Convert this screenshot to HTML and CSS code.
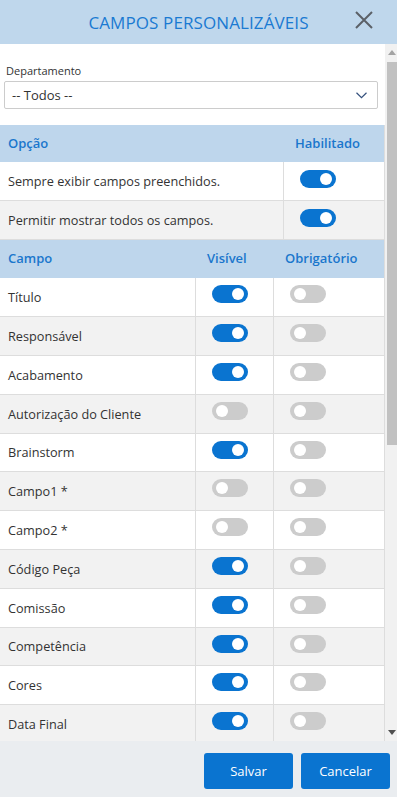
FILE: index.html
```html
<!DOCTYPE html>
<html lang="pt-BR">
<head>
<meta charset="UTF-8">
<meta name="viewport" content="width=device-width, initial-scale=1.0">
<title>Campos Personalizáveis</title>
<link rel="stylesheet" href="styles.css">
</head>
<body>

<div class="dialog">
    <div class="dialog-header">
        <h1>CAMPOS PERSONALIZÁVEIS</h1>
        <button class="close" aria-label="Fechar">
            <svg width="18" height="18" viewBox="0 0 18 18"><path d="M1 1 L17 17 M17 1 L1 17" stroke="#5b6067" stroke-width="2" fill="none"/></svg>
        </button>
    </div>

    <div class="dialog-body">
        <div class="content">
            <div class="filter">
                <label>Departamento</label>
                <div class="select">
                    <span>-- Todos --</span>
                    <svg width="11" height="7" viewBox="0 0 11 7"><path d="M0.5 0.8 L5.5 5.6 L10.5 0.8" stroke="#34507c" stroke-width="1.2" fill="none"/></svg>
                </div>
            </div>

            <div class="grid options">
                <div class="row head">
                    <div class="cell">Opção</div>
                    <div class="cell">Habilitado</div>
                </div>
                <div class="row">
                    <div class="cell">Sempre exibir campos preenchidos.</div>
                    <div class="cell sw"><span class="toggle on"></span></div>
                </div>
                <div class="row">
                    <div class="cell">Permitir mostrar todos os campos.</div>
                    <div class="cell sw"><span class="toggle on"></span></div>
                </div>
            </div>

            <div class="grid fields" id="fields">
                <div class="row head">
                    <div class="cell">Campo</div>
                    <div class="cell">Visível</div>
                    <div class="cell">Obrigatório</div>
                </div>
            </div>
        </div>

        <div class="scrollbar">
            <div class="arrow">
                <svg width="8" height="5" viewBox="0 0 8 5"><path d="M0 5 L4 0 L8 5 Z" fill="#a3a3a3"/></svg>
            </div>
            <div class="track">
                <div class="thumb"></div>
            </div>
            <div class="arrow">
                <svg width="8" height="5" viewBox="0 0 8 5"><path d="M0 0 L8 0 L4 5 Z" fill="#505050"/></svg>
            </div>
        </div>
    </div>

    <div class="dialog-footer">
        <button class="btn">Salvar</button>
        <button class="btn">Cancelar</button>
    </div>
</div>

<script>
    // lista de campos: [nome, visivel, obrigatorio]
    var campos = [
        ['Título', 1, 0],
        ['Responsável', 1, 0],
        ['Acabamento', 1, 0],
        ['Autorização do Cliente', 0, 0],
        ['Brainstorm', 1, 0],
        ['Campo1 *', 0, 0],
        ['Campo2 *', 0, 0],
        ['Código Peça', 1, 0],
        ['Comissão', 1, 0],
        ['Competência', 1, 0],
        ['Cores', 1, 0],
        ['Data Final', 1, 0]
    ];

    var box = document.getElementById('fields');
    campos.forEach(function (c) {
        var row = document.createElement('div');
        row.className = 'row';
        row.innerHTML =
            '<div class="cell">' + c[0] + '</div>' +
            '<div class="cell sw"><span class="toggle' + (c[1] ? ' on' : '') + '"></span></div>' +
            '<div class="cell sw"><span class="toggle' + (c[2] ? ' on' : '') + '"></span></div>';
        box.appendChild(row);
    });
</script>

</body>
</html>
```

FILE: styles.css
```css
/* Campos personalizáveis */
body {
    margin: 0;
    padding: 0;
    font-family: "Open Sans", Arial, sans-serif;
    color: #333;
    background-color: #fff;
}

.dialog {
    display: flex;
    flex-direction: column;
    height: 797px;
    width: 397px;
}

.dialog-header {
    position: relative;
    height: 44px;
    flex-shrink: 0;
    background-color: #bfd7ec;
    display: flex;
    align-items: center;
    justify-content: center;
}

.dialog-header h1 {
    margin: 0;
    font-size: 17px;
    font-weight: normal;
    color: #1a7ad2;
    letter-spacing: 0.1px;
}

.close {
    position: absolute;
    top: 11px;
    right: 24px;
    width: 18px;
    height: 18px;
    padding: 0;
    border: none;
    background: none;
    cursor: pointer;
}

.close svg {
    display: block;
}

.dialog-body {
    flex: 1;
    display: flex;
    overflow: hidden;
    background-color: #fff;
}

.content {
    width: 385px;
    flex-shrink: 0;
    overflow: hidden;
}

/* barra de rolagem desenhada */
.scrollbar {
    width: 12px;
    display: flex;
    flex-direction: column;
    background-color: #f1f1f1;
}

.arrow {
    height: 17px;
    display: flex;
    align-items: center;
    justify-content: center;
    padding-left: 1px;
}

.track {
    flex: 1;
    padding-top: 1px;
}

.thumb {
    height: 383px;
    margin-left: 2px;
    background-color: #c1c1c1;
}

.filter {
    padding: 20px 7px 16px 4px;
}

.filter label {
    display: block;
    font-size: 11px;
    line-height: 14px;
    margin-left: 2px;
    margin-bottom: 3px;
}

.select {
    height: 28px;
    box-sizing: border-box;
    border: 1px solid #ccc;
    border-radius: 2px;
    display: flex;
    align-items: center;
    justify-content: space-between;
    padding: 0 10px 0 7px;
    font-size: 13px;
}

.grid {
    border-right: 1px solid #ddd;
}

.row {
    display: grid;
    height: 38.8px;
    box-sizing: border-box;
    border-bottom: 1px solid #ddd;
    font-size: 12.7px;
}

.row:nth-child(even) {
    background-color: #fff;
}

.row:nth-child(odd) {
    background-color: #f2f2f2;
}

.row.head {
    background-color: #bed6ec;
    color: #1a76cc;
    font-weight: 600;
    font-size: 13px;
    border-bottom: none;
}

.options .row {
    grid-template-columns: 284px 1fr;
}

.options .row.head {
    height: 37px;
}

.fields .row {
    grid-template-columns: 196px 78px 1fr;
}

.cell {
    display: flex;
    align-items: center;
    padding-left: 8px;
    border-right: 1px solid #ddd;
}

.cell:last-child {
    border-right: none;
}

.row.head .cell {
    border-right: none;
    padding-bottom: 2px;
}

.row.head .cell + .cell {
    padding-left: 11px;
}

.cell.sw {
    align-items: flex-start;
    padding-top: 7px;
    padding-left: 16px;
}

.options .cell.sw {
    padding-top: 8px;
}

.toggle {
    position: relative;
    display: inline-block;
    width: 36px;
    height: 18px;
    border-radius: 9px;
    background-color: #ccc;
}

.toggle::after {
    content: "";
    position: absolute;
    top: 3px;
    left: 4px;
    width: 12px;
    height: 12px;
    border-radius: 50%;
    background-color: #fff;
}

.toggle.on {
    background-color: #0a74d0;
}

.toggle.on::after {
    left: 20px;
}

.dialog-footer {
    height: 56px;
    flex-shrink: 0;
    background-color: #eaedf0;
    display: flex;
    justify-content: flex-end;
    align-items: flex-start;
    gap: 8px;
    padding: 12px 7px 0 0;
    box-sizing: border-box;
}

.btn {
    width: 89px;
    height: 36px;
    border: none;
    border-radius: 3px;
    background-color: #0a74d0;
    color: #fff;
    font-family: "Open Sans", Arial, sans-serif;
    font-size: 13px;
    cursor: pointer;
}
```
